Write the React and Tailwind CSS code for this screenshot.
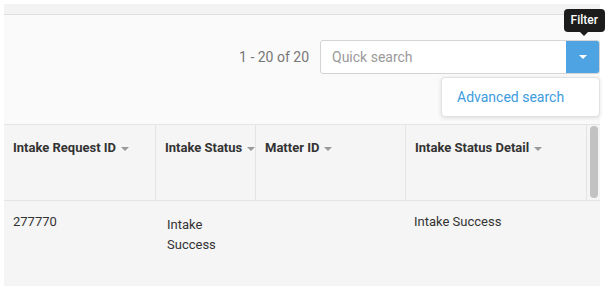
const font = { fontFamily: 'Roboto, "Liberation Sans", sans-serif' }

function Caret() {
  return (
    <svg width="8" height="4" viewBox="0 0 8 4" className="ml-[5px] inline-block">
      <path d="M0 0 L8 0 L4 4 Z" fill="#9a9a9a" />
    </svg>
  )
}

const cols = [
  { label: 'Intake Request ID', w: 'w-[151px]' },
  { label: 'Intake Status', w: 'w-[100px]' },
  { label: 'Matter ID', w: 'w-[150px]' },
  { label: 'Intake Status Detail', w: 'w-[181px]' },
]

export default function App() {
  return (
    <div style={font} className="h-[291px] w-[612px] overflow-hidden bg-white">
      <div className="ml-[4px] mr-[12px] pt-[4px]">
        <div className="h-[11px] border-b border-[#dedede] bg-[#f3f3f3]" />
        <div className="relative h-[109px] bg-[#fafafa]">
          <div className="flex items-center justify-end pt-[25px]">
            <span className="mr-[11px] text-[14px] text-[#777]">1 - 20 of 20</span>
            <div className="flex h-[34px] w-[280px] overflow-hidden rounded-[3px] border border-[#d4d4d4] bg-white">
              <div className="flex flex-1 items-center pl-[11px] text-[14px] text-[#9a9a9a]">Quick search</div>
              <div className="flex w-[33px] items-center justify-center bg-[#4ea4e2]">
                <svg width="8" height="4" viewBox="0 0 8 4">
                  <path d="M0 0 L8 0 L4 4 Z" fill="#fff" />
                </svg>
              </div>
            </div>
          </div>
          <div className="absolute right-[-5px] top-[-6px] flex flex-col items-center">
            <div className="rounded-[4px] bg-[#1c1c1c] px-[7px] py-[4px] text-[12px] font-medium leading-[15px] text-white">Filter</div>
            <div className="h-0 w-0 border-x-[4px] border-t-[4px] border-x-transparent border-t-[#1c1c1c]" />
          </div>
          <div className="absolute right-0 top-[62px] flex h-[40px] w-[159px] items-center rounded-[4px] border border-[#e2e2e2] bg-white pl-[15px] text-[14px] text-[#3d9be0] shadow-[0_1px_4px_rgba(0,0,0,0.12)]">
            Advanced search
          </div>
        </div>
        <div className="flex h-[162px] bg-[#f5f5f5]">
          <div className="flex flex-col">
            <div className="flex h-[77px] border-y border-[#e4e4e4]">
              {cols.map((c, i) => (
                <div key={c.label} className={`${c.w} ${i > 0 ? 'border-l border-[#e4e4e4]' : ''} whitespace-nowrap pl-[9px] pt-[13px] text-[13px] font-bold text-[#333]`}>
                  {c.label}
                  <Caret />
                </div>
              ))}
            </div>
            <div className="flex text-[13px] leading-[20px] text-[#333]">
              <div className="w-[151px] pl-[9px] pt-[11px]">277770</div>
              <div className="w-[100px] pl-[12px] pt-[14px]">Intake<br />Success</div>
              <div className="w-[150px]" />
              <div className="w-[181px] pl-[9px] pt-[11px]">Intake Success</div>
            </div>
          </div>
          <div className="h-[77px] w-[14px] border-y border-l border-[#e4e4e4] pl-[3px] pt-[1px]">
            <div className="h-[72px] w-[8px] rounded-full bg-[#c2c2c2]" />
          </div>
        </div>
      </div>
    </div>
  )
}
